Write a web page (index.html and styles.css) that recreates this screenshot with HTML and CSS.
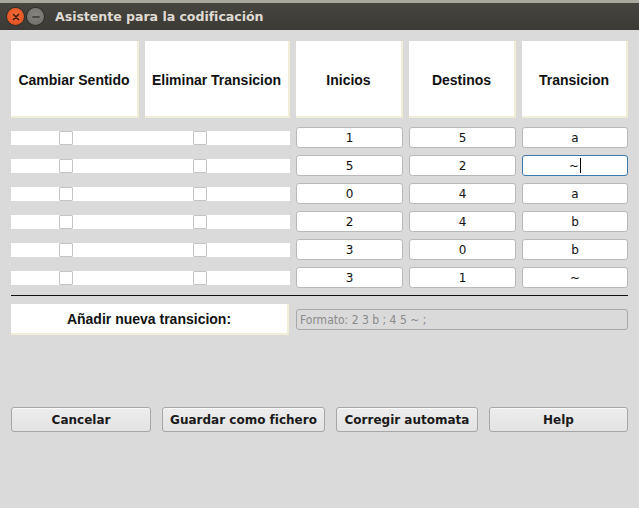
FILE: index.html
```html
<!DOCTYPE html>
<html lang="es">
<head>
<meta charset="utf-8">
<title>Asistente para la codificación</title>
<link rel="stylesheet" href="styles.css">
</head>
<body>
<div class="topstrip"></div>
<div class="titlebar">
  <span class="wbtn close"><svg width="10" height="10" viewBox="0 0 10 10"><path d="M2.5 2.5 L7.5 7.5 M7.5 2.5 L2.5 7.5" stroke="#3a1a10" stroke-width="1.6" stroke-linecap="round"/></svg></span>
  <span class="wbtn mini"><svg width="10" height="10" viewBox="0 0 10 10"><path d="M2 5 H8" stroke="#3a3a36" stroke-width="1.6" stroke-linecap="round"/></svg></span>
  <span class="title">Asistente para la codificación</span>
</div>
<main class="content">
  <div class="grid">
    <div class="head">Cambiar Sentido</div>
    <div class="head">Eliminar Transicion</div>
    <div class="head">Inicios</div>
    <div class="head">Destinos</div>
    <div class="head">Transicion</div>

    <div class="checks"><span class="cb"></span><span class="cb"></span></div>
    <div class="field">1</div><div class="field">5</div><div class="field">a</div>

    <div class="checks"><span class="cb"></span><span class="cb"></span></div>
    <div class="field">5</div><div class="field">2</div><div class="field focus">~<span class="caret"></span></div>

    <div class="checks"><span class="cb"></span><span class="cb"></span></div>
    <div class="field">0</div><div class="field">4</div><div class="field">a</div>

    <div class="checks"><span class="cb"></span><span class="cb"></span></div>
    <div class="field">2</div><div class="field">4</div><div class="field">b</div>

    <div class="checks"><span class="cb"></span><span class="cb"></span></div>
    <div class="field">3</div><div class="field">0</div><div class="field">b</div>

    <div class="checks"><span class="cb"></span><span class="cb"></span></div>
    <div class="field">3</div><div class="field">1</div><div class="field">~</div>
  </div>
  <div class="sep"></div>
  <div class="addrow">
    <div class="addlabel">Añadir nueva transicion:</div>
    <div class="addinput">Formato: 2 3 b ; 4 5 ~ ;</div>
  </div>
  <div class="buttons">
    <button class="btn">Cancelar</button>
    <button class="btn">Guardar como fichero</button>
    <button class="btn">Corregir automata</button>
    <button class="btn">Help</button>
  </div>
</main>
</body>
</html>
```
FILE: styles.css
```css
html, body {
  margin: 0;
  padding: 0;
  background: #dadada;
  width: 639px;
  height: 508px;
  overflow: hidden;
}
.topstrip {
  height: 3px;
  background: #a9a89f;
}
.titlebar {
  height: 27px;
  background: linear-gradient(#46453f, #3b3a35);
  display: flex;
  align-items: center;
  padding-left: 7px;
  box-sizing: border-box;
}
.wbtn {
  width: 17px;
  height: 17px;
  border-radius: 50%;
  display: flex;
  align-items: center;
  justify-content: center;
  margin-right: 3px;
}
.close {
  background: radial-gradient(circle at 50% 40%, #f26b3a, #df4b17);
  box-shadow: 0 0 0 1px #2f2e2a;
}
.mini {
  background: radial-gradient(circle at 50% 40%, #86857f, #6c6b66);
  box-shadow: 0 0 0 1px #2f2e2a;
}
.title {
  margin-left: 8px;
  color: #dfdbd2;
  font-family: "DejaVu Sans", sans-serif;
  font-weight: bold;
  font-size: 12.6px;
  letter-spacing: -0.05px;
}
.content {
  padding: 11px 11px 0 11px;
}
.grid {
  display: grid;
  grid-template-columns: 128px 145px 107px 107px 106px;
  column-gap: 6px;
  row-gap: 7px;
  grid-template-rows: 79px;
  grid-auto-rows: 21px;
}
.head {
  background: #ffffff;
  border-right: 2px solid #f1edd6;
  border-bottom: 2px solid #f1edd6;
  display: flex;
  align-items: center;
  justify-content: center;
  font-family: "Liberation Sans", Arial, sans-serif;
  font-weight: bold;
  font-size: 14px;
  color: #111;
  margin-bottom: 2px;
  padding-top: 2px;
}
.checks {
  grid-column: 1 / 3;
  align-self: center;
  height: 14px;
  background: #ffffff;
  display: flex;
  align-items: center;
  padding-left: 48px;
  gap: 120px;
}
.cb {
  width: 12px;
  height: 12px;
  border: 1px solid #c4c4c4;
  border-radius: 1px;
  background: #fff;
}
.field {
  background: #fff;
  border: 1px solid #b9b9b9;
  border-radius: 3px;
  display: flex;
  align-items: center;
  justify-content: center;
  font-family: "DejaVu Sans", sans-serif;
  font-size: 12px;
  color: #111;
}
.field.focus {
  border-color: #3b78b0;
}
.caret {
  display: inline-block;
  width: 1px;
  height: 15px;
  background: #000;
  margin-left: 1px;
}
.sep {
  height: 1px;
  background: #111;
  margin-top: 7px;
}
.addrow {
  margin-top: 8px;
  display: flex;
  align-items: center;
  gap: 7px;
}
.addlabel {
  width: 276px;
  height: 29px;
  background: #fff;
  border-right: 2px solid #f1edd6;
  border-bottom: 2px solid #f1edd6;
  display: flex;
  align-items: center;
  justify-content: center;
  font-family: "Liberation Sans", Arial, sans-serif;
  font-weight: bold;
  font-size: 14px;
  color: #111;
}
.addinput {
  flex: 1;
  height: 19px;
  border: 1px solid #a9a9a9;
  border-radius: 3px;
  background: #dadada;
  display: flex;
  align-items: center;
  padding-left: 3px;
  font-family: "DejaVu Sans Condensed", "DejaVu Sans", sans-serif;
  font-stretch: condensed;
  font-size: 12px;
  color: #8a8a8a;
}
.buttons {
  margin-top: 72px;
  display: grid;
  grid-template-columns: 140px 163px 142px 139px;
  column-gap: 11px;
}
.btn {
  height: 25px;
  margin: 0;
  padding: 0;
  border: 1px solid #a6a6a6;
  border-radius: 3px;
  background: linear-gradient(#ededed, #e3e3e3);
  box-shadow: inset 0 1px 0 #fafafa;
  font-family: "DejaVu Sans", sans-serif;
  font-weight: bold;
  font-size: 12px;
  color: #1a1a1a;
}
```
